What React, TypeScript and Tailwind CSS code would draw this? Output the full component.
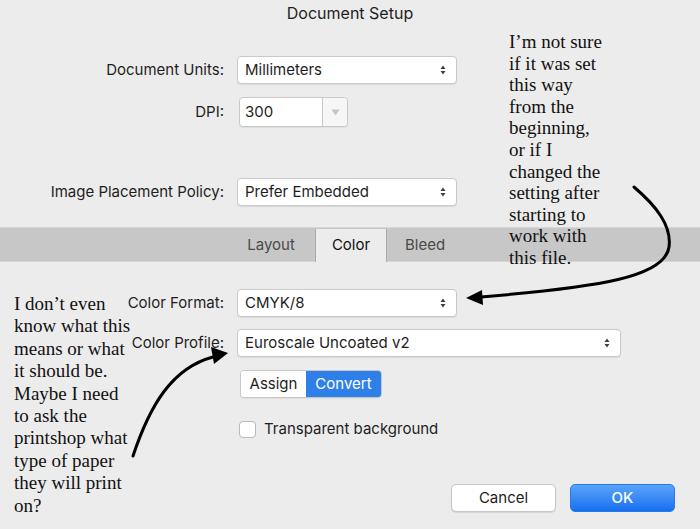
import React from 'react';

const ui = { fontFamily: 'Inter, "Noto Sans", sans-serif' };
const serif = { fontFamily: '"Liberation Serif", "Times New Roman", serif' };

const Stepper = () => (
  <svg width="6" height="12" viewBox="0 0 6 12" className="shrink-0">
    <path d="M3 1.5 L5.5 5 L0.5 5 Z" fill="#404040" />
    <path d="M3 10.5 L5.5 7 L0.5 7 Z" fill="#404040" />
  </svg>
);

const Select = ({ value, width }: { value: string; width: string }) => (
  <div
    className={`${width} h-[28px] flex items-center justify-between pl-[7px] pr-[10px] bg-white border border-[#c9c9c9] rounded-[4px] shadow-[0_1px_1px_rgba(0,0,0,0.08)] text-[15px] text-[#1e1e1e]`}
  >
    <span>{value}</span>
    <Stepper />
  </div>
);

const Row = ({ label, children, className = '' }: { label: string; children: React.ReactNode; className?: string }) => (
  <div className={`flex items-center ${className}`}>
    <div className="w-[225px] text-right text-[15px] text-[#1e1e1e] pr-[1px]">{label}</div>
    <div className="ml-[12px] flex">{children}</div>
  </div>
);

export default function App() {
  return (
    <div className="relative w-[700px] h-[529px] overflow-hidden bg-[#ececec]" style={ui}>
      <div className="flex flex-col">
        <div className="h-[25px] flex items-center justify-center text-[16px] text-[#1e1e1e]">Document Setup</div>

        <Row label="Document Units:" className="mt-[31px]">
          <Select value="Millimeters" width="w-[220px]" />
        </Row>

        <Row label="DPI:" className="mt-[13px]">
          <div className="ml-[2px] w-[109px] h-[30px] flex bg-white border border-[#c9c9c9] rounded-[4px] shadow-[0_1px_1px_rgba(0,0,0,0.06)]">
            <div className="flex-1 flex items-center pl-[5px] text-[15px] text-[#1e1e1e]">300</div>
            <div className="w-[25px] flex items-center justify-center border-l border-[#c9c9c9] bg-[#f6f6f6] rounded-r-[4px]">
              <svg width="9" height="7" viewBox="0 0 9 7">
                <path d="M0.5 0.5 L8.5 0.5 L4.5 6.5 Z" fill="#c4c4c4" />
              </svg>
            </div>
          </div>
        </Row>

        <Row label="Image Placement Policy:" className="mt-[51px]">
          <Select value="Prefer Embedded" width="w-[220px]" />
        </Row>

        {/* Tab bar */}
        <div className="mt-[21px] h-[35px] flex items-end pl-[227px] bg-[#c7c7c7] border-t border-[#d6d6d6] border-b border-[#a9a9a9]">
          <div className="w-[88px] h-[32px] flex items-center justify-center text-[15px] text-[#4a4a4a]">Layout</div>
          <div className="w-[72px] h-[33px] -mb-px flex items-center justify-center bg-[#ececec] border-x border-[#a9a9a9] text-[15px] text-[#111]">
            Color
          </div>
          <div className="w-[76px] h-[32px] flex items-center justify-center text-[15px] text-[#4a4a4a]">Bleed</div>
        </div>

        <Row label="Color Format:" className="mt-[27px]">
          <Select value="CMYK/8" width="w-[220px]" />
        </Row>

        <Row label="Color Profile:" className="mt-[12px]">
          <Select value="Euroscale Uncoated v2" width="w-[384px]" />
        </Row>

        <div className="mt-[13px] ml-[240px] flex h-[28px] w-[142px] border border-[#c6c6c6] rounded-[4px] overflow-hidden text-[15px] shadow-[0_1px_1px_rgba(0,0,0,0.06)]">
          <div className="w-[65px] flex items-center justify-center bg-white text-[#1e1e1e]">Assign</div>
          <div className="flex-1 flex items-center justify-center bg-[#2f7fe9] text-white">Convert</div>
        </div>

        <div className="mt-[23px] ml-[239px] flex items-center h-[17px]">
          <div className="w-[17px] h-[17px] bg-white border border-[#b9b9b9] rounded-[4px]" />
          <span className="ml-[8px] text-[15px] text-[#1e1e1e]">Transparent background</span>
        </div>

        <div className="mt-[46px] flex justify-end gap-[14px] pr-[25px]">
          <div className="w-[105px] h-[28px] flex items-center justify-center bg-white border border-[#c5c5c5] rounded-[5px] shadow-[0_1px_1px_rgba(0,0,0,0.1)] text-[15px] text-[#1e1e1e]">
            Cancel
          </div>
          <div className="w-[105px] h-[28px] flex items-center justify-center rounded-[5px] bg-gradient-to-b from-[#5aa3fa] to-[#1470f0] border border-[#2a78e6] text-[15px] font-medium text-white">
            OK
          </div>
        </div>
      </div>

      {/* Annotations laid over the dialog */}
      <div className="absolute left-[509px] top-[31px] text-[19px] leading-[21.6px] text-[#111]" style={serif}>
        I’m not sure<br />
        if it was set<br />
        this way<br />
        from the<br />
        beginning,<br />
        or if I<br />
        changed the<br />
        setting after<br />
        starting to<br />
        work with<br />
        this file.
      </div>

      <div className="absolute left-[14px] top-[293px] text-[19px] leading-[22.4px] text-[#111]" style={serif}>
        I don’t even<br />
        know what this<br />
        means or what<br />
        it should be.<br />
        Maybe I need<br />
        to ask the<br />
        printshop what<br />
        type of paper<br />
        they will print<br />
        on?
      </div>

      <svg className="absolute inset-0 pointer-events-none" width="700" height="529" viewBox="0 0 700 529">
        <path d="M634 187 C 655 205, 672 225, 669 247 C 665 277, 600 287, 481 297" fill="none" stroke="#000" strokeWidth="3" strokeLinecap="round" />
        <polygon points="466,298 482,290 483,305" fill="#000" />
        <path d="M133 456 C 150 405, 172 368, 213 357" fill="none" stroke="#000" strokeWidth="3" strokeLinecap="round" />
        <polygon points="228,353 211,347 214,364" fill="#000" />
      </svg>
    </div>
  );
}
